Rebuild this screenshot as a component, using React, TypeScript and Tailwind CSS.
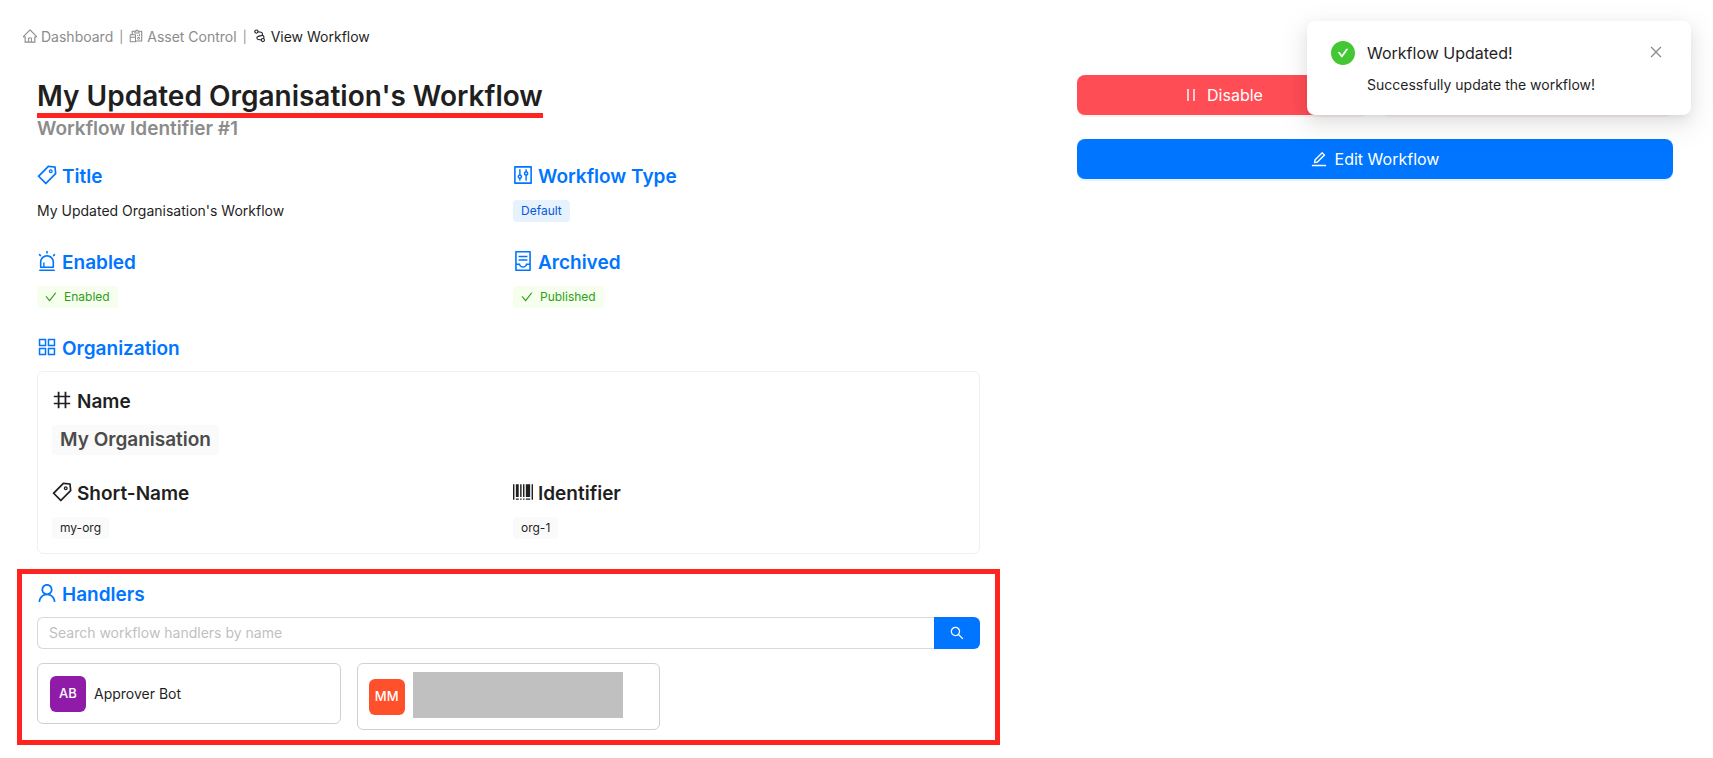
import type { ReactNode } from "react";
import type { IconType } from "react-icons";
import {
  AiFillCheckCircle,
  AiOutlineAlert,
  AiOutlineAppstore,
  AiOutlineBarcode,
  AiOutlineCheck,
  AiOutlineClose,
  AiOutlineContainer,
  AiOutlineControl,
  AiOutlineEdit,
  AiOutlineHome,
  AiOutlineNumber,
  AiOutlinePause,
  AiOutlineReconciliation,
  AiOutlineSearch,
  AiOutlineTag,
  AiOutlineUser,
} from "react-icons/ai";

/** Ant icon drawn on its tight 896-unit box, so that it fills the given size. */
function Icon({ as: Glyph, className = "" }: { as: IconType; className?: string }) {
  return <Glyph viewBox="64 64 896 896" className={`shrink-0 ${className}`} aria-hidden="true" />;
}

function WorkflowIcon() {
  return (
    <svg viewBox="0 0 14 14" className="mb-0.5 size-[14px]" fill="none" stroke="currentColor" strokeWidth="1.1" aria-hidden="true">
      <circle cx="3.4" cy="2.6" r="1.6" />
      <circle cx="9.9" cy="11.1" r="1.6" />
      <path d="M5 2.8l3.1.5a1.7 1.7 0 0 1 .2 3.3L5 7.4a1.6 1.6 0 0 0 .2 3.1l3.1.5" />
      <path d="M8.6 6.5h.6a1.6 1.6 0 0 1 1.2 2.8" />
    </svg>
  );
}

function Heading({ icon, dark, children }: { icon: IconType; dark?: boolean; children: ReactNode }) {
  return (
    <h2 className={`flex h-7 items-center gap-[5px] pt-0.5 text-[19px] font-semibold ${dark ? "text-[#1f1f1f]" : "text-[#0075ff]"}`}>
      <Icon as={icon} className="mb-1 size-5" />
      {children}
    </h2>
  );
}

function Tag({ className, children }: { className: string; children: ReactNode }) {
  return (
    <span className={`inline-flex h-[22px] items-center gap-[7px] self-start rounded px-2 text-xs ${className}`}>
      {children}
    </span>
  );
}

function Field({ icon, title, dark, children }: { icon: IconType; title: string; dark?: boolean; children: ReactNode }) {
  return (
    <div className="flex flex-col gap-2.5">
      <Heading icon={icon} dark={dark}>{title}</Heading>
      <div className="flex h-[22px] items-center">{children}</div>
    </div>
  );
}

function Avatar({ className, children }: { className: string; children: ReactNode }) {
  return (
    <span className={`flex size-9 shrink-0 items-center justify-center rounded-md text-[13px] font-medium text-white ${className}`}>
      {children}
    </span>
  );
}

export default function App() {
  return (
    <div className="min-h-screen bg-white pb-2 pt-[26px] font-[Inter,sans-serif] text-sm text-[#1f1f1f]">
      <nav aria-label="Breadcrumb" className="flex h-[22px] items-center gap-1.5 pl-[23px] text-[#8c8c8c]">
        <a href="#dashboard" className="flex items-center gap-1">
          <Icon as={AiOutlineHome} className="mb-0.5 size-[14px]" />
          Dashboard
        </a>
        <span className="text-xs">|</span>
        <a href="#assets" className="flex items-center gap-1">
          <Icon as={AiOutlineReconciliation} className="mb-0.5 size-[14px]" />
          Asset Control
        </a>
        <span className="text-xs">|</span>
        <span className="flex items-center gap-1 text-[#1f1f1f]">
          <WorkflowIcon />
          View Workflow
        </span>
      </nav>

      <div className="flex items-start gap-[77px] pr-10 pl-[17px] pt-[27px]">
        <main className="min-w-0 flex-[983]">
          <div className="px-5">
            <h1 className="inline-block border-b-5 border-[#ff2420] pt-1 text-[28px] leading-[34px] font-semibold">
              My Updated Organisation's Workflow
            </h1>
            <p className="text-[19px] leading-[22px] font-semibold text-[#8c8c8c]">Workflow Identifier #1</p>

            <div className="mt-[22px] grid grid-cols-[476px_1fr] gap-y-[26px]">
              <Field icon={AiOutlineTag} title="Title">My Updated Organisation's Workflow</Field>
              <Field icon={AiOutlineControl} title="Workflow Type">
                <Tag className="bg-[#e6f3ff] text-[#0958d9]">Default</Tag>
              </Field>
              <Field icon={AiOutlineAlert} title="Enabled">
                <Tag className="bg-[#f6ffed] text-[#2f9e1b]"><Icon as={AiOutlineCheck} />Enabled</Tag>
              </Field>
              <Field icon={AiOutlineContainer} title="Archived">
                <Tag className="bg-[#f6ffed] text-[#2f9e1b]"><Icon as={AiOutlineCheck} />Published</Tag>
              </Field>
              <div className="col-span-2">
                <Heading icon={AiOutlineAppstore}>Organization</Heading>
                <div className="mt-[9px] flex flex-col gap-6 rounded-md border border-[#f0f0f0] px-[14px] pt-[15px] pb-[14px]">
                  <div className="flex flex-col gap-2.5">
                    <Heading icon={AiOutlineNumber} dark>Name</Heading>
                    <span className="flex h-[30px] items-center self-start rounded bg-[#fafafa] px-2 text-[19px] font-semibold text-[#4b4b4b]">
                      My Organisation
                    </span>
                  </div>
                  <div className="grid grid-cols-[461px_1fr]">
                    <Field icon={AiOutlineTag} title="Short-Name" dark>
                      <Tag className="bg-[#fafafa]">my-org</Tag>
                    </Field>
                    <Field icon={AiOutlineBarcode} title="Identifier" dark>
                      <Tag className="bg-[#fafafa]">org-1</Tag>
                    </Field>
                  </div>
                </div>
              </div>
            </div>
          </div>

          <section className="mt-[15px] border-5 border-[#ff2420] px-[15px] pt-1.5 pb-2.5">
            <Heading icon={AiOutlineUser}>Handlers</Heading>
            <form className="mt-[9px] flex h-8" onSubmit={(e) => e.preventDefault()}>
              <input
                type="text"
                aria-label="Search workflow handlers by name"
                placeholder="Search workflow handlers by name"
                className="min-w-0 flex-1 rounded-l-md border border-r-0 border-[#d9d9d9] px-[11px] outline-none placeholder:text-[#bfbfbf]"
              />
              <button type="submit" aria-label="Search" className="flex w-[46px] items-center justify-center rounded-r-md bg-[#0075ff] text-white">
                <Icon as={AiOutlineSearch} className="size-[14px]" />
              </button>
            </form>
            <div className="mt-[14px] grid grid-cols-3 items-start gap-4">
              <div className="flex h-[61px] items-center gap-2 rounded-md border border-[#d0d0d0] px-3">
                <Avatar className="bg-[#8f1ba8]">AB</Avatar>
                Approver Bot
              </div>
              <div className="flex h-[67px] items-center gap-2 rounded-md border border-[#d0d0d0] pr-9 pl-[11px]">
                <Avatar className="bg-[#ff502c]">MM</Avatar>
                <span className="mb-1 h-[46px] flex-1 bg-[#c0c0c0]" />
              </div>
            </div>
          </section>
        </main>

        <aside className="grid flex-[596] grid-cols-2 gap-x-3 gap-y-6 text-base text-white">
          <button type="button" className="flex h-10 items-center justify-center gap-2 rounded-lg bg-[#ff4d55] shadow-[0_2px_0_rgba(255,38,5,0.06)]">
            <Icon as={AiOutlinePause} />
            Disable
          </button>
          <button type="button" aria-label="Archive" className="h-10 rounded-lg bg-[#ff4d55] shadow-[0_2px_0_rgba(255,38,5,0.06)]" />
          <button type="button" className="col-span-2 flex h-10 items-center justify-center gap-2 rounded-lg bg-[#0075ff] shadow-[0_2px_0_rgba(5,145,255,0.1)]">
            <Icon as={AiOutlineEdit} />
            Edit Workflow
          </button>
        </aside>
      </div>

      <div
        role="status"
        className="absolute top-[21px] right-[22px] flex w-96 gap-3 rounded-lg bg-white px-6 py-5 shadow-[0_6px_16px_0_rgba(0,0,0,0.08),0_3px_6px_-4px_rgba(0,0,0,0.12),0_9px_28px_8px_rgba(0,0,0,0.05)]"
      >
        <Icon as={AiFillCheckCircle} className="size-6 text-[#43c732]" />
        <div className="flex-1">
          <p className="text-base leading-6">Workflow Updated!</p>
          <p className="mt-[9px] leading-[21px]">Successfully update the workflow!</p>
        </div>
        <button type="button" aria-label="Close" className="flex size-[22px] items-center justify-center text-[#8c8c8c]">
          <Icon as={AiOutlineClose} className="size-[14px]" />
        </button>
      </div>
    </div>
  );
}
